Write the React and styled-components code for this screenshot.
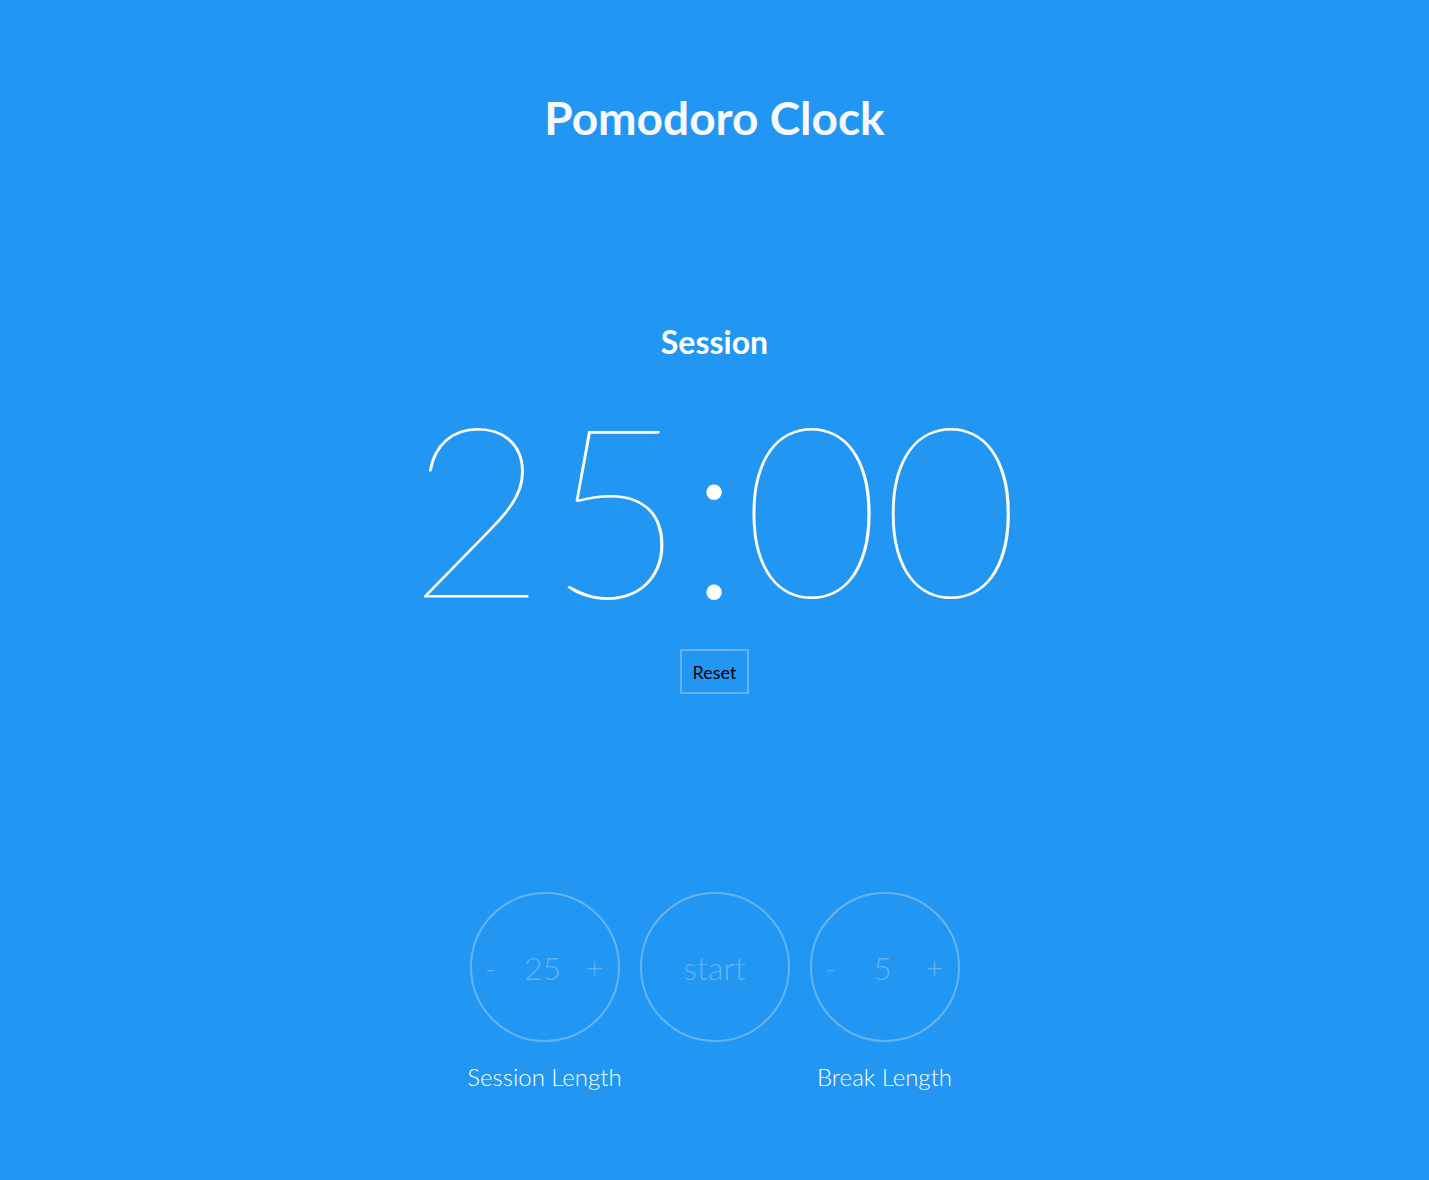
import React, { useState } from "react";
import styled, { createGlobalStyle } from "styled-components";

const GlobalStyle = createGlobalStyle`
  html, body {
    margin: 0;
    padding: 0;
    background: #2196f3;
    font-family: Lato, "Open Sans", sans-serif;
  }
`;

const Page = styled.main`
  min-height: 1180px;
  display: flex;
  flex-direction: column;
  align-items: center;
  color: #fff;
`;

const Title = styled.h1`
  margin: 90px 0 0;
  font-size: 46px;
  font-weight: 700;
  line-height: 56px;
  color: #f8f8ff;
`;

const Label = styled.h2`
  margin: 176px 0 0;
  font-size: 32px;
  font-weight: 700;
  line-height: 40px;
`;

const Time = styled.div`
  margin-top: 28px;
  font-size: 238px;
  font-weight: 100;
  line-height: 232px;
  letter-spacing: 1px;
`;

const ResetButton = styled.button`
  margin-top: 27px;
  padding: 0 11px;
  height: 45px;
  background: transparent;
  border: 2px solid rgba(255, 255, 255, 0.3);
  font-family: Lato, sans-serif;
  font-size: 18px;
  color: #000;
  cursor: pointer;
`;

const Controls = styled.div`
  margin-top: 198px;
  display: grid;
  grid-template-columns: repeat(3, 150px);
  column-gap: 20px;
  row-gap: 20px;
  justify-items: center;
`;

const Circle = styled.div`
  box-sizing: border-box;
  width: 150px;
  height: 150px;
  border-radius: 50%;
  border: 2px solid rgba(255, 255, 255, 0.3);
  display: flex;
  align-items: center;
  justify-content: ${(p) => (p.center ? "center" : "space-between")};
  padding: ${(p) => (p.center ? "0" : "0 12px 0 8px")};
  color: rgba(255, 255, 255, 0.3);
  font-weight: 300;
  font-size: 32px;
  cursor: pointer;
`;

const Sign = styled.span`
  font-size: 30px;
  width: 22px;
  text-align: center;
`;

const Caption = styled.div`
  font-size: 24px;
  font-weight: 300;
  white-space: nowrap;
  grid-column: ${(p) => p.col};
`;

function LengthCircle({ value }) {
  return (
    <Circle>
      <Sign>-</Sign>
      <span>{value}</span>
      <Sign>+</Sign>
    </Circle>
  );
}

export default function App() {
  const [session] = useState(25);
  const [brk] = useState(5);
  return (
    <Page>
      <GlobalStyle />
      <Title>Pomodoro Clock</Title>
      <Label>Session</Label>
      <Time>25:00</Time>
      <ResetButton>Reset</ResetButton>
      <Controls>
        <LengthCircle value={session} />
        <Circle center>start</Circle>
        <LengthCircle value={brk} />
        <Caption col={1}>Session Length</Caption>
        <Caption col={3}>Break Length</Caption>
      </Controls>
    </Page>
  );
}
